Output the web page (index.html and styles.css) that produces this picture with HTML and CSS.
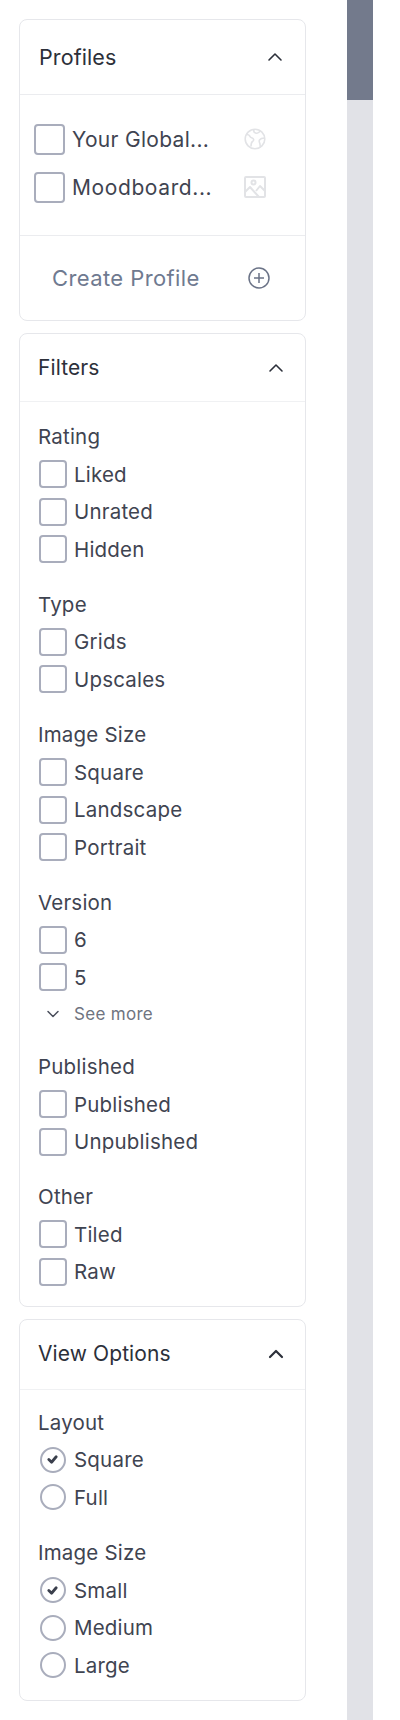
FILE: index.html
```html
<!DOCTYPE html>
<html lang="en">
<head>
<meta charset="utf-8">
<title>Filters</title>
<link rel="stylesheet" href="styles.css">
</head>
<body>
<div class="page">
  <aside class="sidebar">
    <section class="card card-profiles">
      <header class="card-head head-profiles">
        <h2 class="title title-lg">Profiles</h2>
        <svg class="chev" viewBox="0 0 20 20"><path d="M4 13l6-6 6 6"/></svg>
      </header>
      <div class="profile-list">
        <div class="profile"><span class="box box-lg"></span><span class="profile-name">Your Global...</span>
          <svg class="pico" viewBox="0 0 22 22"><circle cx="11" cy="11" r="9.800"/><path d="M2.500 6.500c2 0 3 .5 3.500 2s2 1 3 2 1 2-.5 3-1.500 3-1.500 5M10 1.500c-.5 1.500 0 3 1.500 3.500s3.500 0 4.500-2M20.500 10c-2 0-4 .5-5 2s.5 3 .5 4.500 0 2 1 2.500"/></svg></div>
        <div class="profile"><span class="box box-lg"></span><span class="profile-name name-wide">Moodboard...</span>
          <svg class="pico pico-img" viewBox="0 0 22 22"><rect x="1" y="1" width="20" height="20" rx="1"/><circle cx="9.500" cy="6.500" r="2"/><path d="M1 16l5-5 9 10M12 15l4-5 5 5"/></svg></div>
      </div>
      <div class="create">
        <span class="create-label">Create Profile</span>
        <svg class="plus" viewBox="0 0 22 22"><circle cx="11" cy="11" r="10"/><path d="M11 6v10M6 11h10"/></svg>
      </div>
    </section>

    <section class="card">
      <header class="card-head">
        <h2 class="title">Filters</h2>
        <svg class="chev" viewBox="0 0 20 20"><path d="M4 13l6-6 6 6"/></svg>
      </header>
      <div class="card-body">
        <div class="group"><div class="label">Rating</div>
          <div class="opt"><span class="box"></span>Liked</div>
          <div class="opt"><span class="box"></span>Unrated</div>
          <div class="opt"><span class="box"></span>Hidden</div>
        </div>
        <div class="group"><div class="label">Type</div>
          <div class="opt"><span class="box"></span>Grids</div>
          <div class="opt"><span class="box"></span>Upscales</div>
        </div>
        <div class="group"><div class="label">Image Size</div>
          <div class="opt"><span class="box"></span>Square</div>
          <div class="opt"><span class="box"></span>Landscape</div>
          <div class="opt"><span class="box"></span>Portrait</div>
        </div>
        <div class="group"><div class="label">Version</div>
          <div class="opt"><span class="box"></span>6</div>
          <div class="opt"><span class="box"></span>5</div>
          <div class="more"><span class="more-ico"><svg class="chev-sm" viewBox="0 0 14 14"><path d="M2 4.500l5 5 5-5"/></svg></span>See more</div>
        </div>
        <div class="group"><div class="label">Published</div>
          <div class="opt"><span class="box"></span>Published</div>
          <div class="opt"><span class="box"></span>Unpublished</div>
        </div>
        <div class="group"><div class="label">Other</div>
          <div class="opt"><span class="box"></span>Tiled</div>
          <div class="opt"><span class="box"></span>Raw</div>
        </div>
      </div>
    </section>

    <section class="card">
      <header class="card-head head-view">
        <h2 class="title">View Options</h2>
        <svg class="chev chev-bold" viewBox="0 0 20 20"><path d="M4 13l6-6 6 6"/></svg>
      </header>
      <div class="card-body body-view">
        <div class="group"><div class="label">Layout</div>
          <div class="opt"><span class="radio"><svg class="tick" viewBox="0 0 12 12"><path d="M2 6l3 3 5-6"/></svg></span>Square</div>
          <div class="opt"><span class="radio"></span>Full</div>
        </div>
        <div class="group"><div class="label">Image Size</div>
          <div class="opt"><span class="radio"><svg class="tick" viewBox="0 0 12 12"><path d="M2 6l3 3 5-6"/></svg></span>Small</div>
          <div class="opt"><span class="radio"></span>Medium</div>
          <div class="opt"><span class="radio"></span>Large</div>
        </div>
      </div>
    </section>
  </aside>
  <div class="scrollbar"><div class="thumb"></div></div>
</div>
</body>
</html>
```

FILE: styles.css
```css
* { box-sizing: border-box; }
html, body { margin: 0; background: #fff; }
body { font-family: "Inter", "Liberation Sans", sans-serif; color: #3f4451; }
.page { display: flex; height: 1720px; overflow: hidden; padding-left: 19px; }
.sidebar { width: 287px; padding-top: 19px; display: flex; flex-direction: column; gap: 12px; }
.scrollbar { width: 26px; margin-left: 41px; background: #e1e2e7; height: 100%; }
.thumb { height: 100px; background: #737a8c; }

.card { border: 1.5px solid #e6e7eb; border-radius: 8px; background: #fff; }
.card-head { height: 68px; display: flex; align-items: center; justify-content: space-between; padding: 0 19px 0 18px; border-bottom: 1px solid #f0f1f3; }
.head-profiles { height: 75px; padding: 0 20px 0 19px; border-bottom-color: #ebecef; }
.head-view { height: 70px; }
.title { margin: 0; font-size: 21px; font-weight: 400; color: #2c303a; line-height: 28px; letter-spacing: .1px; }
.title-lg { font-size: 21.500px; }
.chev { width: 20px; height: 20px; fill: none; stroke: #2c303a; stroke-width: 1.600; stroke-linecap: round; stroke-linejoin: round; flex: none; }
.chev-bold { stroke-width: 2.200; }

.profile-list { padding: 29px 0 33px 14px; border-bottom: 1px solid #ebecef; display: flex; flex-direction: column; gap: 18px; }
.profile { display: flex; align-items: center; height: 30px; }
.profile-name { width: 179px; padding-left: 7px; font-size: 21px; color: #3f4451; letter-spacing: .3px; }
.name-wide { letter-spacing: .6px; }
.pico { width: 22px; height: 22px; fill: none; stroke: #e2e3e6; stroke-width: 1.600; stroke-linejoin: round; }
.pico-img { stroke-width: 2; }
.create { height: 84px; display: flex; align-items: center; padding: 0 35px 0 32px; justify-content: space-between; }
.create-label { font-size: 22px; color: #6f7a90; letter-spacing: .4px; }
.plus { width: 22px; height: 22px; fill: none; stroke: #6b7387; stroke-width: 1.500; }

.box { width: 28px; height: 28px; border: 2px solid #a9adbc; border-radius: 4px; flex: none; background: #fff; }
.box-lg { width: 31px; height: 31px; }
.radio { width: 26px; height: 26px; margin: 0 1px; border: 2px solid #a9adbc; border-radius: 50%; flex: none; display: flex; align-items: center; justify-content: center; }
.tick { width: 11px; height: 11px; fill: none; stroke: #3a3f4c; stroke-width: 3; stroke-linecap: round; stroke-linejoin: round; }

.card-body { padding: 17px 18px 0 18.500px; }
.body-view { padding-top: 15px; padding-bottom: 1px; }
.group { padding-bottom: 17.800px; }
.card-body .group:last-child { padding-bottom: 14px; }
.label { height: 37.500px; line-height: 36px; font-size: 20.500px; color: #3f4451; letter-spacing: .2px; margin-left: -.5px; }
.opt { height: 37.500px; display: flex; align-items: center; gap: 7.500px; font-size: 20.500px; letter-spacing: .2px; padding-bottom: 2.500px; }
.more { height: 34px; display: flex; align-items: center; font-size: 17px; color: #6f7480; letter-spacing: .3px; }
.more-ico { width: 35.500px; display: flex; padding-left: 7px; }
.chev-sm { width: 14px; height: 14px; fill: none; stroke: #4a4f5c; stroke-width: 1.500; stroke-linecap: round; stroke-linejoin: round; }
```
